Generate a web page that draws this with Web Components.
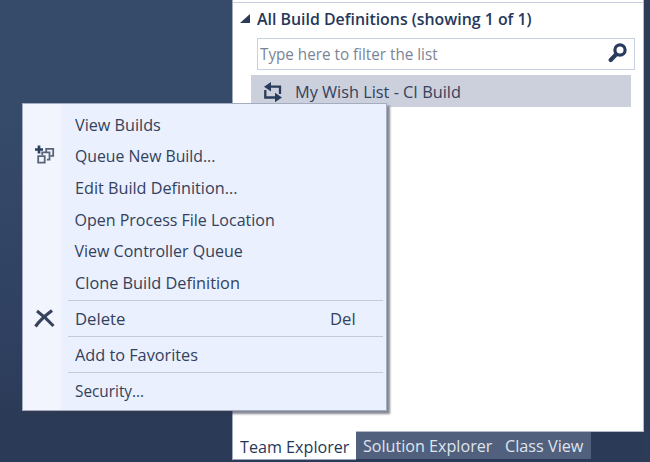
<!DOCTYPE html>
<html lang="en"><head><meta charset="utf-8"><title>Team Explorer</title>
<style>
html,body{margin:0;width:650px;height:462px;overflow:hidden}
body{font:16px "Open Sans","Noto Sans",sans-serif;color:#33415c}
</style></head><body>
<ide-window>
  <explorer-panel>
    <section-header><fit-text w="275">All Build Definitions (showing 1 of 1)</fit-text></section-header>
    <filter-box><fit-text w="178">Type here to filter the list</fit-text></filter-box>
    <build-item><fit-text w="166">My Wish List - CI Build</fit-text></build-item>
  </explorer-panel>
  <tab-strip slot="tabs">
    <tool-tab active style="width:124px"><fit-text w="109">Team Explorer</fit-text></tool-tab>
    <tool-tab style="width:142px"><fit-text w="129">Solution Explorer</fit-text></tool-tab>
    <tool-tab style="width:93px"><fit-text w="78">Class View</fit-text></tool-tab>
  </tab-strip>
  <context-menu slot="menu">
    <menu-item><fit-text w="86">View Builds</fit-text></menu-item>
    <menu-item icon="queue"><fit-text w="140">Queue New Build...</fit-text></menu-item>
    <menu-item><fit-text w="162">Edit Build Definition...</fit-text></menu-item>
    <menu-item><fit-text w="200">Open Process File Location</fit-text></menu-item>
    <menu-item><fit-text w="168">View Controller Queue</fit-text></menu-item>
    <menu-item><fit-text w="165">Clone Build Definition</fit-text></menu-item>
    <menu-line></menu-line>
    <menu-item icon="delete"><fit-text w="50">Delete</fit-text><fit-text slot="key" w="26">Del</fit-text></menu-item>
    <menu-line></menu-line>
    <menu-item><fit-text w="123">Add to Favorites</fit-text></menu-item>
    <menu-line></menu-line>
    <menu-item><fit-text w="69">Security...</fit-text></menu-item>
  </context-menu>
</ide-window>
<script>
const define = (name, html, setup) => customElements.define(name, class extends HTMLElement {
  connectedCallback() {
    if (this.shadowRoot) return;
    this.attachShadow({mode: "open"}).innerHTML = html;
    if (setup) setup(this, this.shadowRoot);
  }
});

define("ide-window", `<style>
:host{display:flex;flex-direction:column;box-sizing:border-box;position:relative;width:650px;height:462px;padding-left:232px;
background:linear-gradient(#2b3b58,#2b3b58) 643px 0/7px 462px no-repeat,linear-gradient(#364b69 0,#364a69 120px,#2f4060 340px,#2b3a56 420px)}
</style><slot></slot><slot name="tabs"></slot><slot name="menu"></slot>`);

define("explorer-panel", `<style>
:host{display:flex;flex-direction:column;box-sizing:border-box;width:412px;height:432px;background:#fff;border:1px solid #b4bacb;border-left-color:#a1aabd;border-top:0;padding:2px 2px 0 0}
.rule{height:1px;background:#c8cddb;margin-right:-2px}
</style><div class="rule"></div><slot></slot>`);

define("section-header", `<style>
:host{display:flex;align-items:center;height:31px;padding-left:7px;font-weight:600;color:#26385a}
svg{width:10px;height:9px;margin-right:7px}
</style><svg viewBox="0 0 10 9"><path d="M10 0V9H0Z" fill="#2b3b59"/></svg><slot></slot>`);

define("filter-box", `<style>
:host{display:flex;align-items:center;justify-content:space-between;box-sizing:border-box;width:378px;height:32px;margin:4px 0 0 24px;padding:0 7px 0 2px;border:1px solid #c8d0e3;color:#7b8496}
svg{width:19px;height:20px;margin-bottom:2px}
</style><slot></slot><svg viewBox="0 0 19 20"><circle cx="12" cy="7" r="5.1" fill="none" stroke="#2a3c5b" stroke-width="3.2"/><path d="M8 11.5 2.7 17" stroke="#2a3c5b" stroke-width="4.2" stroke-linecap="round"/></svg>`);

define("build-item", `<style>
:host{display:flex;align-items:center;width:380px;height:32px;box-sizing:border-box;padding-top:2px;margin:5px 0 0 18px;background:#ccd0dc}
svg{width:20px;height:20px;margin:0 12px 0 12px}
</style><svg viewBox="0 0 20 20"><g fill="none" stroke="#2a3c5b" stroke-width="2.3"><path d="M6 4.7H17V12"/><path d="M2.3 8v7.5H14"/></g><path d="M1 4.7 8 0v9.4ZM19 15.5 12 10.8v9.4Z" fill="#2a3c5b"/></svg><slot></slot>`);

define("tab-strip", `<style>:host{display:flex;height:28px}</style><slot></slot>`);
define("tool-tab", `<style>
:host{display:flex;box-sizing:border-box;height:27px;padding:1px 0 0 7px;align-items:center;background:#51607c;color:#dfe4ee}
:host([active]){margin-top:-1px;padding-top:3px;height:29px;background:#fff;color:#26385a;border-left:1px solid #a1aabd;border-bottom:1px solid #9aa4b9}
</style><slot></slot>`);

define("context-menu", `<style>
:host{display:block;position:absolute;left:22px;top:103px;box-sizing:border-box;width:365px;height:308px;padding-top:5px;border:1px solid #a4adc0;
background:linear-gradient(90deg,#f2f5fe 38px,#eaf0fd 38px);box-shadow:3px 3px 2px rgba(50,58,78,.6)}
</style><slot></slot>`);

define("menu-line", `<style>:host{display:block;height:1px;margin:1px 3px 2px 45px;background:#c5cad7}</style>`);

define("menu-item", `<style>
:host{display:flex;align-items:center;height:31.6px;padding-right:30px}
:host(:nth-of-type(n+7)){height:32px}
.icon{width:51.5px;height:22px;display:flex;align-items:center}
svg{width:22px;height:22px;margin-left:11px}
.key{margin-left:auto}
</style><span class="icon"></span><slot></slot><span class="key"><slot name="key"></slot></span>`,
(el, root) => {
  const art = {
    queue: `<g fill="none" stroke="#58647a" stroke-width="1.8"><path d="M12.2 7V3.8h7v7h-2.6M8.2 10V7.3h7.3v7.3h-2.6"/><path d="M4.2 11.2h6.5v6.5H4.2Z"/></g><path d="M5 .5v8M1 4.5h8" stroke="#2d405f" stroke-width="2.7"/>`,
    delete: `<path d="M3 3C7 6 14 12 19.5 18" fill="none" stroke="#36435a" stroke-width="3"/><path d="M18 2.5C12 7 6 12 1.5 18.5" fill="none" stroke="#36435a" stroke-width="3.2"/>`
  };
  const icon = art[el.getAttribute("icon")];
  if (icon) root.querySelector(".icon").innerHTML = `<svg viewBox="0 0 22 22">${icon}</svg>`;
});

// Condenses a single-line label to the width it is given.
define("fit-text", `<style>
:host{display:block;white-space:nowrap;line-height:22px;flex:none}
span{display:inline-block;transform-origin:0 50%}
</style><span><slot></slot></span>`, (el, root) => {
  const span = root.querySelector("span"), w = +el.getAttribute("w");
  el.style.width = w + "px";
  span.style.transform = `scaleX(${w / span.offsetWidth})`;
});
</script></body></html>
